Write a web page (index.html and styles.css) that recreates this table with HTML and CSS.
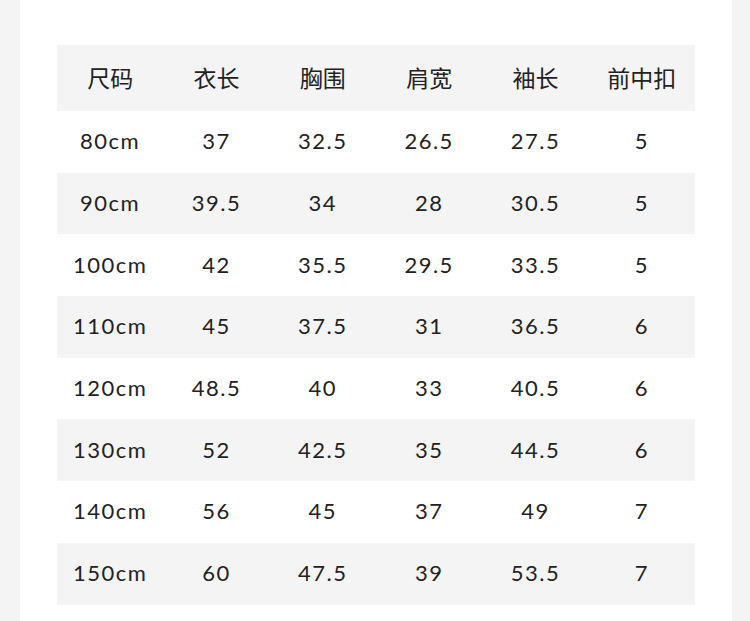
FILE: index.html
```html
<!DOCTYPE html>
<html lang="zh">
<head>
<meta charset="utf-8">
<link rel="stylesheet" href="styles.css">
</head>
<body>
<div class="panel">
  <table class="size-table">
    <thead>
      <tr><th>尺码</th><th>衣长</th><th>胸围</th><th>肩宽</th><th>袖长</th><th>前中扣</th></tr>
    </thead>
    <tbody>
      <tr><td>80cm</td><td>37</td><td>32.5</td><td>26.5</td><td>27.5</td><td>5</td></tr>
      <tr><td>90cm</td><td>39.5</td><td>34</td><td>28</td><td>30.5</td><td>5</td></tr>
      <tr><td>100cm</td><td>42</td><td>35.5</td><td>29.5</td><td>33.5</td><td>5</td></tr>
      <tr><td>110cm</td><td>45</td><td>37.5</td><td>31</td><td>36.5</td><td>6</td></tr>
      <tr><td>120cm</td><td>48.5</td><td>40</td><td>33</td><td>40.5</td><td>6</td></tr>
      <tr><td>130cm</td><td>52</td><td>42.5</td><td>35</td><td>44.5</td><td>6</td></tr>
      <tr><td>140cm</td><td>56</td><td>45</td><td>37</td><td>49</td><td>7</td></tr>
      <tr><td>150cm</td><td>60</td><td>47.5</td><td>39</td><td>53.5</td><td>7</td></tr>
    </tbody>
  </table>
</div>
</body>
</html>
```
FILE: styles.css
```css
html, body {
  margin: 0;
  padding: 0;
  background: #f4f4f4;
}
body {
  width: 750px;
  height: 621px;
  overflow: hidden;
}
.panel {
  margin: 0 18px 0 20px;
  height: 621px;
  background: #ffffff;
  padding: 45px 37px 0 37px;
  box-sizing: border-box;
}
.size-table {
  width: 638px;
  border-collapse: collapse;
  table-layout: fixed;
  color: #222222;
  font-family: "Lato", "Noto Sans CJK SC", sans-serif;
}
.size-table th {
  height: 63px;
  padding: 0 0 3px 0;
  font-weight: normal;
  font-size: 23px;
  font-family: "Noto Sans CJK SC", sans-serif;
  background: #f4f4f4;
  text-align: center;
}
.size-table td {
  height: 59.7px;
  padding: 0 0 2px 0;
  font-size: 22px;
  font-weight: normal;
  letter-spacing: 1.5px;
  text-align: center;
}
.size-table tbody tr:nth-child(even) td {
  background: #f4f4f4;
}
```
